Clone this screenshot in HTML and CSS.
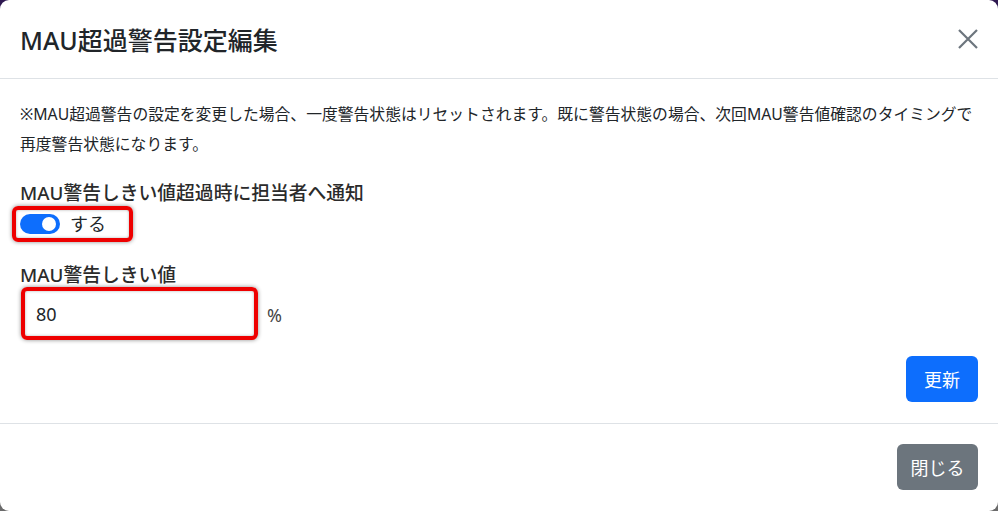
FILE: index.html
```html
<!DOCTYPE html>
<html lang="ja">
<head>
<meta charset="utf-8">
<title>MAU超過警告設定編集</title>
<link rel="stylesheet" href="styles.css">
</head>
<body>
<div class="modal">
  <div class="modal-header">
    <h5 class="modal-title">MAU超過警告設定編集</h5>
    <button class="btn-close" aria-label="閉じる">
      <svg viewBox="0 0 20 20" width="20" height="20"><path d="M1 1L19 19M19 1L1 19" stroke="#6c757d" stroke-width="2.2" fill="none"/></svg>
    </button>
  </div>
  <div class="modal-body">
    <p class="note">※MAU超過警告の設定を変更した場合、一度警告状態はリセットされます。既に警告状態の場合、次回MAU警告値確認のタイミングで<br>再度警告状態になります。</p>
    <div class="field-label">MAU警告しきい値超過時に担当者へ通知</div>
    <div class="switch-box">
      <span class="switch"><span class="knob"></span></span>
      <span class="switch-text">する</span>
    </div>
    <div class="field-label second">MAU警告しきい値</div>
    <div class="input-row">
      <div class="input">80</div>
      <span class="unit">%</span>
    </div>
    <div class="actions">
      <button class="btn btn-primary">更新</button>
    </div>
  </div>
  <div class="modal-footer">
    <button class="btn btn-secondary">閉じる</button>
  </div>
</div>
</body>
</html>
```
FILE: styles.css
```css
* { box-sizing: border-box; }
html, body { margin: 0; padding: 0; }
body {
  width: 998px;
  height: 511px;
  background: linear-gradient(180deg, #2e1850 0%, #4a4458 60%, #6b6b6b 100%);
  font-family: "Noto Sans", "Noto Sans CJK JP", sans-serif;
  color: #212529;
  overflow: hidden;
}
.modal {
  width: 998px;
  height: 511px;
  background: #fff;
  border-radius: 9px;
  display: flex;
  flex-direction: column;
}
.modal-header {
  height: 79px;
  border-bottom: 1px solid #dee2e6;
  display: flex;
  align-items: center;
  justify-content: space-between;
  padding: 0 20px 0 20px;
}
.modal-title {
  margin: 0;
  font-size: 25px;
  font-weight: 500;
  line-height: 30px;
  padding-top: 2px;
  color: #212529;
}
.btn-close {
  border: 0;
  background: none;
  padding: 0;
  width: 20px;
  height: 20px;
  display: flex;
}
.modal-body {
  flex: 1;
  padding: 20px 20px 20px 20px;
  display: flex;
  flex-direction: column;
}
.note {
  margin: 0;
  font-size: 15.8px;
  line-height: 30px;
  white-space: nowrap;
  color: #212529;
}
.field-label {
  margin-top: 22px;
  font-size: 18.8px;
  font-weight: 500;
  line-height: 24px;
  color: #2b2b2b;
}
.field-label.second { margin-top: 21px; }
.switch-box {
  align-self: flex-start;
  margin-left: -8px;
  margin-top: 1px;
  width: 121px;
  height: 36px;
  border: 4px solid #ee0000;
  border-radius: 6px;
  box-shadow: 0 0 4px rgba(0,0,0,0.45), inset 0 0 3px rgba(0,0,0,0.3);
  display: flex;
  align-items: center;
  padding-left: 4px;
  gap: 10px;
}
.switch {
  width: 40px;
  height: 20px;
  border-radius: 10px;
  background: #0d6efd;
  display: flex;
  align-items: center;
  justify-content: flex-end;
  padding-right: 4px;
}
.knob {
  width: 14px;
  height: 14px;
  border-radius: 50%;
  background: #fff;
}
.switch-text {
  font-size: 18px;
  line-height: 24px;
  color: #212529;
}
.input-row {
  display: flex;
  align-items: center;
  gap: 9px;
}
.input {
  margin-left: 1px;
  width: 237px;
  height: 53px;
  border: 4px solid #ee0000;
  border-radius: 6px;
  box-shadow: 0 0 4px rgba(0,0,0,0.45), inset 0 0 3px rgba(0,0,0,0.3);
  display: flex;
  align-items: center;
  padding-left: 11px;
  font-size: 18px;
  color: #212529;
}
.unit {
  font-size: 18px;
  color: #444;
  padding-top: 2px;
}
.actions {
  margin-top: 16px;
  display: flex;
  justify-content: flex-end;
}
.btn {
  border: 0;
  border-radius: 6px;
  height: 46px;
  font-family: inherit;
  font-size: 18px;
  color: #fff;
  padding: 0;
}
.btn-primary { background: #0d6efd; width: 72px; }
.btn-secondary { background: #6c757d; width: 81px; }
.modal-footer {
  border-top: 1px solid #dee2e6;
  padding: 20px 20px 21px 20px;
  display: flex;
  justify-content: flex-end;
}
```
